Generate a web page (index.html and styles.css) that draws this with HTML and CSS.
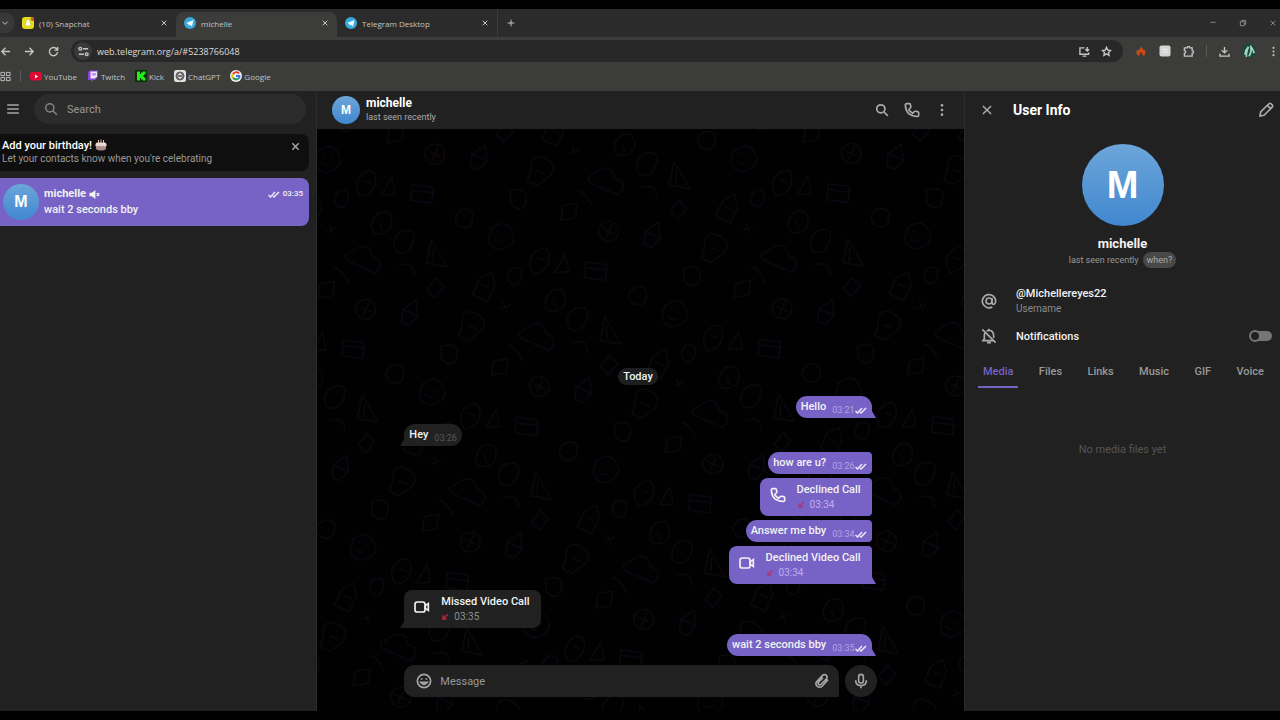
FILE: index.html
```html
<!DOCTYPE html>
<html lang="en">

<head>
    <meta charset="utf-8">
    <title>michelle</title>
    <link rel="stylesheet" href="styles.css">
</head>

<body>
    <!-- shared icons -->
    <svg class="sprite" aria-hidden="true">
        <symbol id="close" viewBox="0 0 24 24"><path d="M5 5l14 14M19 5L5 19" /></symbol>
        <symbol id="search" viewBox="0 0 24 24"><circle cx="10" cy="10" r="7" /><path d="M15 15l7 7" /></symbol>
        <symbol id="phone" viewBox="0 0 24 24"><path d="M4 2.500h4q1.500 0 1.700 1.500l.5 3q.2 1.200-.7 2L7 11.300Q9.300 15 13 17l2.200-2.400q.9-.9 2-.7l3.200.6q1.600.3 1.600 1.800v3.500q0 1.900-1.900 1.900Q2.500 21.200 2 4.600 2 2.500 4 2.500z" /></symbol>
        <symbol id="video" viewBox="0 0 24 24"><rect x="1.500" y="4.500" width="15" height="15" rx="3.500" /><path d="M17 10l4.500-3v10L17 14z" /></symbol>
        <symbol id="checks" viewBox="0 0 24 14"><path d="M1 8l4 4L14 2M10 10l2 2L22 2" /></symbol>
        <symbol id="missed" viewBox="0 0 12 12"><path d="M10 2L3 9M3 3.500V9h5.500" /></symbol>
        <symbol id="dots" viewBox="0 0 24 24"><g fill="currentColor" stroke="none"><circle cx="12" cy="4" r="2.300" /><circle cx="12" cy="12" r="2.300" /><circle cx="12" cy="20" r="2.300" /></g></symbol>
        <symbol id="telegram" viewBox="0 0 24 24"><circle cx="12" cy="12" r="12" fill="#35a9dc" stroke="none" /><path d="M4 12l15-6-3 13-4.500-3.500L9 18v-4z" fill="#f3fbff" stroke="none" /></symbol>
    </svg>

    <header class="browser">
        <div class="tabStrip">
            <button class="tabMenu" aria-label="Search tabs"><svg class="icon tiny" viewBox="0 0 24 24"><path d="M4 8l8 8 8-8" /></svg></button>
            <div class="tab">
                <svg class="favicon" viewBox="0 0 24 24"><rect width="24" height="24" rx="6" fill="#e6df13" /><path d="M12 5q4 0 4 4v3l3 3-3 1-2 3h-4l-2-3-3-1 3-3V9q0-4 4-4z" fill="#fff" stroke="#b5b022" stroke-width="1" /><circle cx="21" cy="4" r="4" fill="#c85b22" /></svg>
                <span class="tabTitle">(10) Snapchat</span>
                <button aria-label="Close tab"><svg class="icon tiny"><use href="#close" /></svg></button>
            </div>
            <div class="tab activeTab">
                <svg class="favicon"><use href="#telegram" /></svg>
                <span class="tabTitle">michelle</span>
                <button aria-label="Close tab"><svg class="icon tiny"><use href="#close" /></svg></button>
            </div>
            <div class="tab lastTab">
                <svg class="favicon"><use href="#telegram" /></svg>
                <span class="tabTitle">Telegram Desktop</span>
                <button aria-label="Close tab"><svg class="icon tiny"><use href="#close" /></svg></button>
            </div>
            <button class="newTab" aria-label="New tab"><svg class="icon tiny" viewBox="0 0 24 24"><path d="M12 2v20M2 12h20" /></svg></button>
            <div class="windowButtons">
                <button aria-label="Minimize"><svg class="icon tiny" viewBox="0 0 24 24"><path d="M4 10h16" /></svg></button>
                <button aria-label="Restore"><svg class="icon tiny" viewBox="0 0 24 24"><path d="M4 8h12v12H4zM8 8V4h12v12h-4" /></svg></button>
                <button aria-label="Close"><svg class="icon tiny"><use href="#close" /></svg></button>
            </div>
        </div>

        <div class="toolbar">
            <div class="navButtons">
                <button aria-label="Back"><svg class="icon small" viewBox="0 0 24 24"><path d="M22 12H4M12 4l-8 8 8 8" /></svg></button>
                <button aria-label="Forward"><svg class="icon small" viewBox="0 0 24 24"><path d="M2 12h18M12 4l8 8-8 8" /></svg></button>
                <button aria-label="Reload"><svg class="icon small" viewBox="0 0 24 24"><path d="M20 8a9 9 0 1 0 1 5M21 2v7h-7" /></svg></button>
            </div>
            <div class="address">
                <button class="siteInfo" aria-label="Site information"><svg class="icon small" viewBox="0 0 24 24"><path d="M11 6h11M2 18h11" /><circle cx="5" cy="6" r="3" /><circle cx="19" cy="18" r="3" /></svg></button>
                <input type="text" value="web.telegram.org/a/#5238766048" aria-label="Address">
                <button aria-label="Install app"><svg class="icon small" viewBox="0 0 24 24"><path d="M12 4H2v14h19v-4M8 22h8M18 2v8M14 7l4 4 4-4" /></svg></button>
                <button aria-label="Bookmark"><svg class="icon small" viewBox="0 0 24 24"><path d="M12 3l2.800 6 6.200.7-4.600 4.300 1.200 6.500L12 17.200 6.400 20.500 7.600 14 3 9.700 9.200 9z" /></svg></button>
            </div>
            <div class="extensions">
                <svg class="favicon" viewBox="0 0 24 24"><path d="M13 3q1 5 4 7l1-2q5 7 1 13h-4q1-4-3-7-4 3-3 7H6Q0 16 5 9l3 3q0-5 5-9z" fill="#cf4a17" /></svg>
                <svg class="favicon" viewBox="0 0 24 24"><rect x="1" y="1" width="22" height="22" rx="4" fill="#d4d4d4" /><path d="M6 9h12M6 14h12" stroke="#eee" stroke-width="2" /></svg>
                <svg class="icon small" viewBox="0 0 24 24"><path d="M3 4h6q0-3 3-3t3 3h5v6q3 0 3 3t-3 3v6H3v-6q3 0 3-3t-3-3z" /></svg>
                <span class="divider"></span>
                <svg class="icon small" viewBox="0 0 24 24"><path d="M12 2v13M6 9l6 6 6-6M2 17v5h20v-5" /></svg>
                <svg class="profile" viewBox="0 0 24 24"><circle cx="12" cy="12" r="12" fill="#174a3b" /><path d="M5 18q1-8 6-13-5 12-3 17M14 3q5 6 7 13M12 21q5-8 3-17" fill="none" stroke="#a8d3c4" stroke-width="3" /></svg>
                <svg class="icon small"><use href="#dots" /></svg>
            </div>
        </div>

        <nav class="bookmarks">
            <svg class="icon small appsIcon" viewBox="0 0 24 24"><path d="M2 3h8v7H2zM14 3h8v7h-8zM2 14h8v7H2zM14 14h8v7h-8z" /></svg>
            <span class="divider"></span>
            <a href="#"><svg class="favicon" viewBox="0 0 24 24"><rect y="4" width="24" height="17" rx="5" fill="#e00b32" /><path d="M10 9l6 4-6 4z" fill="#fff" /></svg>YouTube</a>
            <a href="#"><svg class="favicon" viewBox="0 0 24 24"><path d="M5 1h17v13l-6 6h-4l-4 4v-4H2V5z" fill="#8846db" /><path d="M7 3h13v10l-4 4H7z" fill="#eee3fa" /><path d="M12 6v5M16 6v5" stroke="#8846db" stroke-width="2" /></svg>Twitch</a>
            <a href="#"><svg class="favicon" viewBox="0 0 24 24"><rect width="24" height="24" rx="3" fill="#092b08" /><path d="M4 3h6v5h2V5h3V3h6v6h-3v2h-2v2h2v2h3v6h-6v-2h-3v-3h-2v5H4z" fill="#23ee18" /></svg>Kick</a>
            <a href="#"><svg class="favicon" viewBox="0 0 24 24"><rect width="24" height="24" rx="5" fill="#e2e2e2" /><g fill="none" stroke="#555" stroke-width="2"><circle cx="12" cy="12" r="8" /><path d="M6 8l6-3 6 4v6l-6 4-6-4zM6 9l12 6M18 9L6 15" /></g></svg>ChatGPT</a>
            <a href="#"><svg class="favicon" viewBox="0 0 24 24"><circle cx="12" cy="12" r="12" fill="#f2f2f2" /><g fill="none" stroke-width="4"><path d="M6 8q6-7 12-1" stroke="#e34133" /><path d="M6 8q-3 4 0 8" stroke="#f2b90b" /><path d="M6 16q5 5 11 1" stroke="#2ba04c" /><path d="M17 17q3-3 2-5h-7" stroke="#3879e4" /></g></svg>Google</a>
        </nav>
    </header>

    <div class="app">
        <aside class="chatList">
            <div class="listHeader">
                <button aria-label="Menu"><svg class="icon medium" viewBox="0 0 24 24"><path d="M2 5h20M2 12h20M2 19h20" /></svg></button>
                <div class="searchBox">
                    <svg class="icon medium"><use href="#search" /></svg>
                    <input type="text" placeholder="Search" aria-label="Search">
                </div>
            </div>
            <div class="birthday">
                <div>
                    <p class="birthdayTitle">Add your birthday!
                        <svg class="favicon" viewBox="0 0 24 24"><path d="M7 2v6M12 1v7M17 2v6" stroke="#e8bb94" stroke-width="2" /><rect x="1" y="7" width="22" height="10" rx="4" fill="#ead9d4" /><path d="M2 13q3 4 5 0 3 4 5 0 3 4 5 0 3 4 5 0v7q-3 3-10 3T2 20z" fill="#a98d87" /></svg>
                    </p>
                    <p class="muted">Let your contacts know when you're celebrating</p>
                </div>
                <button aria-label="Dismiss"><svg class="icon small"><use href="#close" /></svg></button>
            </div>
            <a class="chatItem" href="#">
                <span class="avatar avatarList">M</span>
                <span class="chatText">
                    <span class="chatRow">
                        <span class="chatName">michelle</span>
                        <svg class="icon small" viewBox="0 0 24 24"><path d="M1 8h5l8-6v20l-8-6H1z" fill="currentColor" stroke="none" /><path d="M17 9l5 6M22 9l-5 6" /></svg>
                        <span class="chatTime"><svg class="checks"><use href="#checks" /></svg>03:35</span>
                    </span>
                    <span class="preview">wait 2 seconds bby</span>
                </span>
            </a>
        </aside>

        <main class="chat">
            <div class="chatHeader">
                <span class="avatar avatarSmall">M</span>
                <div class="peer">
                    <h1>michelle</h1>
                    <p>last seen recently</p>
                </div>
                <button aria-label="Search in chat"><svg class="icon medium bold"><use href="#search" /></svg></button>
                <button aria-label="Call"><svg class="icon large"><use href="#phone" /></svg></button>
                <button aria-label="More"><svg class="icon medium"><use href="#dots" /></svg></button>
            </div>

            <div class="conversation">
                <!-- doodle wallpaper -->
                <svg class="wallpaper" aria-hidden="true">
                    <defs>
                        <pattern id="doodles" width="190" height="170" patternUnits="userSpaceOnUse" patternTransform="rotate(24)">
                            <g fill="none" stroke-linecap="round">
                                <g stroke="#0e0a19">
                                    <path d="M10 20q8-16 20-6t-4 22q-16 4-16-16zM16 20h2M25 20h2M17 28q4 4 8-1" />
                                    <path d="M110 12l20-6 5 15-20 6zM113 17l20-6" />
                                    <path d="M80 100q12-22 22-6 16-2 10 14H82q-8-2-2-8z" />
                                    <path d="M152 130l8-14 8 14-4 12h-8zM152 130h16" />
                                    <path d="M45 48q10-8 12 4t-8 10q-8-4-4-14zM170 88l10 4-4 14-10-4z" />
                                </g>
                                <g stroke="#140a0f">
                                    <path d="M60 22q8-12 14 0 6 14-7 22-14-8-7-22zM64 28h7" />
                                    <path d="M150 55l25 18-20 5zM155 62l5 12" />
                                    <path d="M22 120q-8-16 8-16t12 14l-8 14H24zM28 118h8" />
                                    <circle cx="118" cy="145" r="10" />
                                    <path d="M112 145h12M118 138v14M118 60q14-12 16 4t-12 16q-10-8-4-20z" />
                                </g>
                                <g stroke="#0c0e10">
                                    <path d="M20 70l8-10 8 10v18H20zM24 75h8" />
                                    <path d="M90 52q10-10 16 2t-10 18q-12-4-6-20zM95 60l6 6" />
                                    <path d="M165 15q10-8 14 4t-10 12q-12-4-4-16z" />
                                    <path d="M66 140l12-8 4 14-12 8zM130 92q12-12 18 2M50 82l8 8M58 82l-8 8" />
                                    <path d="M12 148q14-12 18 2t-12 10zM92 128q-14-12-20-8M88 14l10 14-12 6z" />
                                </g>
                            </g>
                        </pattern>
                    </defs>
                    <rect width="100%" height="100%" fill="url(#doodles)" />
                </svg>

                <div class="messages">
                    <span class="day">Today</span>

                    <div class="group own">
                        <div class="bubble tail">Hello<span class="time">03:21<svg class="checks"><use href="#checks" /></svg></span></div>
                    </div>
                    <div class="group">
                        <div class="bubble tail">Hey<span class="time">03:26</span></div>
                    </div>
                    <div class="group own">
                        <div class="bubble">how are u?<span class="time">03:26<svg class="checks"><use href="#checks" /></svg></span></div>
                        <div class="bubble call">
                            <svg class="icon large"><use href="#phone" /></svg>
                            <div>
                                <p>Declined Call</p>
                                <p class="callTime"><svg class="arrow"><use href="#missed" /></svg>03:34</p>
                            </div>
                        </div>
                        <div class="bubble">Answer me bby<span class="time">03:34<svg class="checks"><use href="#checks" /></svg></span></div>
                        <div class="bubble call tail">
                            <svg class="icon large"><use href="#video" /></svg>
                            <div>
                                <p>Declined Video Call</p>
                                <p class="callTime"><svg class="arrow"><use href="#missed" /></svg>03:34</p>
                            </div>
                        </div>
                    </div>
                    <div class="group">
                        <div class="bubble call tail">
                            <svg class="icon large"><use href="#video" /></svg>
                            <div>
                                <p>Missed Video Call</p>
                                <p class="callTime"><svg class="arrow"><use href="#missed" /></svg>03:35</p>
                            </div>
                        </div>
                    </div>
                    <div class="group own">
                        <div class="bubble tail">wait 2 seconds bby<span class="time">03:35<svg class="checks"><use href="#checks" /></svg></span></div>
                    </div>
                </div>

                <div class="composer">
                    <div class="messageBox">
                        <button aria-label="Emoji"><svg class="icon large" viewBox="0 0 24 24"><circle cx="12" cy="12" r="10" /><path d="M7 14q5 6 10 0z" /><path d="M8.500 8v2M15.500 8v2" /></svg></button>
                        <input type="text" placeholder="Message" aria-label="Message">
                        <button aria-label="Attach"><svg class="icon large" viewBox="0 0 24 24"><path d="M21 10l-8.500 9.500q-3.500 3.500-7.500.5-4-3.500-.5-7.500l8-8.500q3-3 6-.5 2.500 3-.5 6L10.500 17q-2 1.500-3.500 0t0-3.500L13.500 7" /></svg></button>
                    </div>
                    <button class="mic" aria-label="Record voice message"><svg class="icon large" viewBox="0 0 24 24"><rect x="8.500" y="2" width="7" height="13" rx="3.500" /><path d="M4 11q0 8 8 8t8-8M12 19v4" /></svg></button>
                </div>
            </div>
        </main>

        <aside class="userInfo">
            <div class="infoHeader">
                <button aria-label="Close"><svg class="icon medium"><use href="#close" /></svg></button>
                <h2>User Info</h2>
                <button aria-label="Edit"><svg class="icon large" viewBox="0 0 24 24"><path d="M3 21l1-6L16 3q2-2 4 0l1 1q2 2 0 4L9 20zM14 5l5 5" /></svg></button>
            </div>
            <div class="person">
                <span class="avatar avatarBig">M</span>
                <h3>michelle</h3>
                <p>last seen recently <button class="when">when?</button></p>
            </div>
            <div class="infoRow">
                <svg class="icon large" viewBox="0 0 24 24"><circle cx="12" cy="12" r="4.500" /><path d="M16.500 7.500V14q0 3 2.500 3t3-5A10 10 0 1 0 17 21" /></svg>
                <div>
                    <p>@Michellereyes22</p>
                    <p class="label">Username</p>
                </div>
            </div>
            <div class="infoRow">
                <svg class="icon large" viewBox="0 0 24 24"><path d="M6 7q-1 2-1 5v4l-2 3h16M8.500 4.500q1.500-1 3.500-1 7 0 7 8.500v3M9 22h6M12 3V1M2 2l20 20" /></svg>
                <label for="notifications">Notifications</label>
                <input type="checkbox" id="notifications" class="switch">
            </div>
            <nav class="mediaTabs">
                <a href="#" class="selected">Media</a>
                <a href="#">Files</a>
                <a href="#">Links</a>
                <a href="#">Music</a>
                <a href="#">GIF</a>
                <a href="#">Voice</a>
            </nav>
            <p class="empty">No media files yet</p>
        </aside>
    </div>
</body>

</html>
```

FILE: styles.css
```css
* {
    box-sizing: border-box;
}

body {
    margin: 0;
    padding: 9px 0;
    min-height: 100vh;
    display: flex;
    flex-direction: column;
    overflow-x: hidden;
    background-color: #000;
    color: #f2f2f2;
    font-family: Roboto, sans-serif;
    font-size: 11px;
}

h1, h2, h3, p {
    margin: 0;
}

a {
    color: inherit;
    text-decoration: none;
}

button {
    display: flex;
    align-items: center;
    justify-content: center;
    padding: 0;
    border: 0;
    background: none;
    color: inherit;
    font: inherit;
}

input {
    min-width: 0;
    flex: 1;
    padding: 0;
    border: 0;
    outline: 0;
    background: none;
    color: inherit;
    font: inherit;
}

svg {
    display: block;
    flex-shrink: 0;
}

.sprite {
    position: absolute;
    width: 0;
    height: 0;
}

/* icons */
.icon {
    fill: none;
    stroke: currentColor;
    stroke-width: 2.5;
}

.tiny {
    width: 8px;
    height: 8px;
    stroke-width: 3;
}

.small {
    width: 11px;
    height: 11px;
    stroke-width: 3;
}

.medium {
    width: 14px;
    height: 14px;
}

.bold {
    stroke-width: 3;
}

.large {
    width: 16px;
    height: 16px;
}

.favicon {
    width: 12px;
    height: 12px;
}

.divider {
    width: 1px;
    height: 12px;
    background-color: #5a5a5a;
}

/* browser */
.browser {
    background-color: #3c3c3b;
    color: #c4c4c4;
    font-family: "Open Sans", sans-serif;
    font-size: 8px;
}

.tabStrip {
    display: flex;
    height: 28px;
    background-color: #2b2b2b;
}

.tabMenu {
    width: 14px;
    height: 20px;
    margin-top: 4px;
    padding-right: 4px;
    border-radius: 0 8px 8px 0;
    background-color: #383838;
}

.tab {
    display: flex;
    align-items: center;
    gap: 5px;
    width: 161px;
    padding: 0 8px;
}

.tab:nth-child(2) {
    width: 162px;
}

.tabTitle {
    flex: 1;
}

.activeTab {
    margin-top: 3px;
    padding-bottom: 3px;
    border-radius: 8px 8px 0 0;
    background-color: #3c3c3b;
}

.lastTab {
    border-right: 1px solid #3c3c3b;
}

.newTab {
    width: 25px;
}

.windowButtons {
    display: flex;
    gap: 22px;
    margin-left: auto;
    padding-right: 3px;
    color: #858585;
}

.toolbar {
    display: flex;
    align-items: center;
    gap: 12px;
    height: 28px;
    padding-right: 1px;
}

.navButtons {
    display: flex;
    gap: 13px;
}

.address {
    flex: 1;
    display: flex;
    align-items: center;
    gap: 11px;
    height: 22px;
    padding: 0 11px 0 3px;
    border-radius: 11px;
    background-color: #282828;
}

.address input {
    color: #dcdcdc;
    font-size: 9px;
}

.siteInfo {
    width: 18px;
    height: 18px;
    margin-right: -6px;
    border-radius: 50%;
    background-color: #3a3a3a;
}

.extensions {
    display: flex;
    align-items: center;
    gap: 12px;
}

.profile {
    width: 14px;
    height: 14px;
}

.bookmarks {
    display: flex;
    align-items: center;
    gap: 10px;
    height: 26px;
    padding-bottom: 4px;
}

.bookmarks .divider {
    margin: 0 -1px;
}

.bookmarks a {
    display: flex;
    align-items: center;
    gap: 2px;
}

.appsIcon {
    stroke-width: 2;
}

/* app */
.app {
    flex: 1;
    display: flex;
    background-color: #212121;
}

.avatar {
    display: flex;
    flex-shrink: 0;
    align-items: center;
    justify-content: center;
    border-radius: 50%;
    background: linear-gradient(#6ca5d9, #4188cf);
    color: #fff;
    font-family: "Liberation Sans", sans-serif;
    font-weight: 700;
}

.avatarSmall {
    width: 28px;
    height: 28px;
    font-size: 12px;
}

.avatarList {
    width: 36px;
    height: 36px;
    font-size: 16px;
}

.avatarBig {
    width: 82px;
    height: 82px;
    font-size: 38px;
}

/* chat list */
.chatList {
    flex: 0 0 317px;
    padding-right: 7px;
    border-right: 1px solid #2b2b2b;
}

.listHeader {
    display: flex;
    align-items: center;
    gap: 14px;
    padding: 3px 3px 10px 6px;
    color: #a5a5a5;
}

.searchBox {
    flex: 1;
    display: flex;
    align-items: center;
    gap: 9px;
    height: 30px;
    padding: 0 10px;
    border-radius: 15px;
    background-color: #2c2c2c;
    color: #858585;
}

input::placeholder {
    color: #989898;
    opacity: 1;
}

.birthday {
    display: flex;
    justify-content: space-between;
    align-items: flex-start;
    height: 37px;
    padding: 5px 8px 0 2px;
    border-radius: 0 8px 8px 0;
    background-color: #0f0f0f;
    line-height: 13px;
}

.birthday button {
    margin-top: 2px;
    color: #aaa;
}

.birthdayTitle {
    display: flex;
    gap: 3px;
    color: #fff;
    font-weight: 500;
}

.muted {
    color: #999;
    font-size: 10px;
}

.chatItem {
    display: flex;
    align-items: center;
    gap: 5px;
    height: 48px;
    margin-top: 7px;
    padding: 0 6px 0 3px;
    border-radius: 0 8px 8px 0;
    background-color: #7762c5;
}

.chatText {
    flex: 1;
    line-height: 16px;
}

.chatRow {
    display: flex;
    align-items: center;
    gap: 3px;
}

.chatName {
    font-weight: 700;
}

.chatTime {
    display: flex;
    align-items: center;
    gap: 3px;
    margin-left: auto;
    font-size: 8px;
    font-weight: 500;
}

.preview {
    font-weight: 500;
}

.checks {
    width: 12px;
    height: 7px;
    fill: none;
    stroke: #ece7fb;
    stroke-width: 3;
}

/* chat */
.chat {
    flex: 1;
    display: flex;
    flex-direction: column;
}

.chatHeader {
    display: flex;
    align-items: center;
    gap: 15px;
    height: 38px;
    padding: 0 15px;
    background-color: #212121;
    color: #aaa;
}

.peer {
    flex: 1;
    margin-left: -9px;
    line-height: 14px;
}

.peer h1 {
    color: #fff;
    font-size: 12px;
}

.peer p {
    font-size: 9px;
}

.conversation {
    position: relative;
    flex: 1;
    display: flex;
    flex-direction: column;
    justify-content: flex-end;
    align-items: center;
    gap: 9px;
    padding-bottom: 14px;
    background-color: #010102;
}

.wallpaper {
    position: absolute;
    inset: 0;
    width: 100%;
    height: 100%;
}

.messages,
.composer {
    position: relative;
    display: flex;
    width: 73%;
}

.messages {
    flex-direction: column;
    gap: 6px;
    padding-right: 5px;
}

.day {
    align-self: center;
    margin-bottom: 5px;
    padding: 0 5px;
    border-radius: 9px;
    background-color: #1c1e20;
    font-weight: 500;
    line-height: 17px;
}

.group {
    display: flex;
    flex-direction: column;
    align-items: flex-start;
    gap: 4px;
}

.own {
    align-items: flex-end;
}

.bubble {
    position: relative;
    display: flex;
    gap: 6px;
    height: 22px;
    padding: 0 5px;
    border-radius: 11px;
    background-color: #212121;
    font-weight: 500;
    line-height: 21px;
}

.own .bubble {
    border-radius: 11px 4px 4px 11px;
    background-color: #7762c5;
}

.own .bubble.tail {
    border-radius: 11px 11px 0 11px;
}

.bubble.tail {
    border-bottom-left-radius: 0;
}

.tail::after {
    content: "";
    position: absolute;
    bottom: 0;
    left: -4px;
    border-left: 4px solid transparent;
    border-bottom: 7px solid #212121;
}

.own .tail::after {
    left: auto;
    right: -4px;
    border-left: 0;
    border-right: 4px solid transparent;
    border-bottom-color: #7762c5;
}

.time {
    display: flex;
    align-items: center;
    padding-top: 6px;
    color: #555;
    font-size: 9px;
    font-weight: 400;
    line-height: 16px;
}

.own .time {
    color: #b3a3e6;
}

.bubble.call {
    align-items: center;
    gap: 11px;
    height: 38px;
    padding: 0 11px 0 10px;
    border-radius: 8px 8px 8px 0;
    font-weight: 500;
    line-height: 15px;
}

.own .bubble.call {
    border-radius: 8px 4px 4px 8px;
}

.own .bubble.call.tail {
    border-bottom-right-radius: 0;
}

.call .icon {
    margin-bottom: 4px;
}

.callTime {
    display: flex;
    align-items: center;
    gap: 5px;
    color: #8f8f8f;
    font-size: 10px;
    font-weight: 400;
}

.own .callTime {
    color: #bdaeee;
}

.arrow {
    width: 8px;
    height: 8px;
    fill: none;
    stroke: #b22b35;
    stroke-width: 2;
}

.own .arrow {
    stroke: #a93878;
}

.composer {
    gap: 6px;
    color: #a5a5a5;
}

.messageBox {
    flex: 1;
    display: flex;
    align-items: center;
    gap: 8px;
    height: 32px;
    padding: 0 9px 0 12px;
    border-radius: 10px 10px 0 10px;
    background-color: #212121;
}

.mic {
    width: 32px;
    height: 32px;
    border-radius: 50%;
    background-color: #212121;
}

/* user info */
.userInfo {
    flex: 0 0 316px;
    border-left: 1px solid #2b2b2b;
}

.infoHeader {
    display: flex;
    align-items: center;
    height: 38px;
    padding: 0 6px 0 15px;
    color: #aaa;
}

.infoHeader h2 {
    flex: 1;
    margin-left: 19px;
    color: #fff;
    font-size: 14px;
}

.person {
    display: flex;
    flex-direction: column;
    align-items: center;
    padding-top: 15px;
}

.person h3 {
    margin-top: 10px;
    font-size: 13px;
    line-height: 16px;
}

.person p {
    display: flex;
    align-items: center;
    gap: 4px;
    color: #999;
    font-size: 9px;
}

.when {
    height: 16px;
    padding: 0 4px;
    border-radius: 8px;
    background-color: #484848;
    color: #aaa;
}

.infoRow {
    display: flex;
    align-items: center;
    gap: 19px;
    padding: 0 8px 0 16px;
    font-weight: 500;
    line-height: 15px;
}

.infoRow .icon {
    color: #aaa;
}

.person + .infoRow {
    margin: 18px 0 12px;
}

.label {
    color: #8a8a8a;
    font-size: 10px;
    font-weight: 400;
}

.infoRow label {
    flex: 1;
}

.switch {
    flex: none;
    position: relative;
    appearance: none;
    width: 22px;
    height: 10px;
    margin: 0;
    border-radius: 5px;
    background-color: #757575;
}

.switch::before {
    content: "";
    position: absolute;
    box-sizing: border-box;
    left: -1px;
    top: -1px;
    width: 12px;
    height: 12px;
    border: 2px solid #757575;
    border-radius: 50%;
    background-color: #212121;
}

.mediaTabs {
    display: flex;
    justify-content: space-between;
    margin-top: 14px;
    padding: 0 11px 0 13px;
    color: #999;
    font-weight: 500;
}

.mediaTabs a {
    padding: 0 5px;
    border-bottom: 2px solid transparent;
    line-height: 28px;
}

.mediaTabs .selected {
    border-color: #7762c5;
    color: #7762c5;
}

.empty {
    margin-top: 55px;
    color: #555;
    text-align: center;
}
```
